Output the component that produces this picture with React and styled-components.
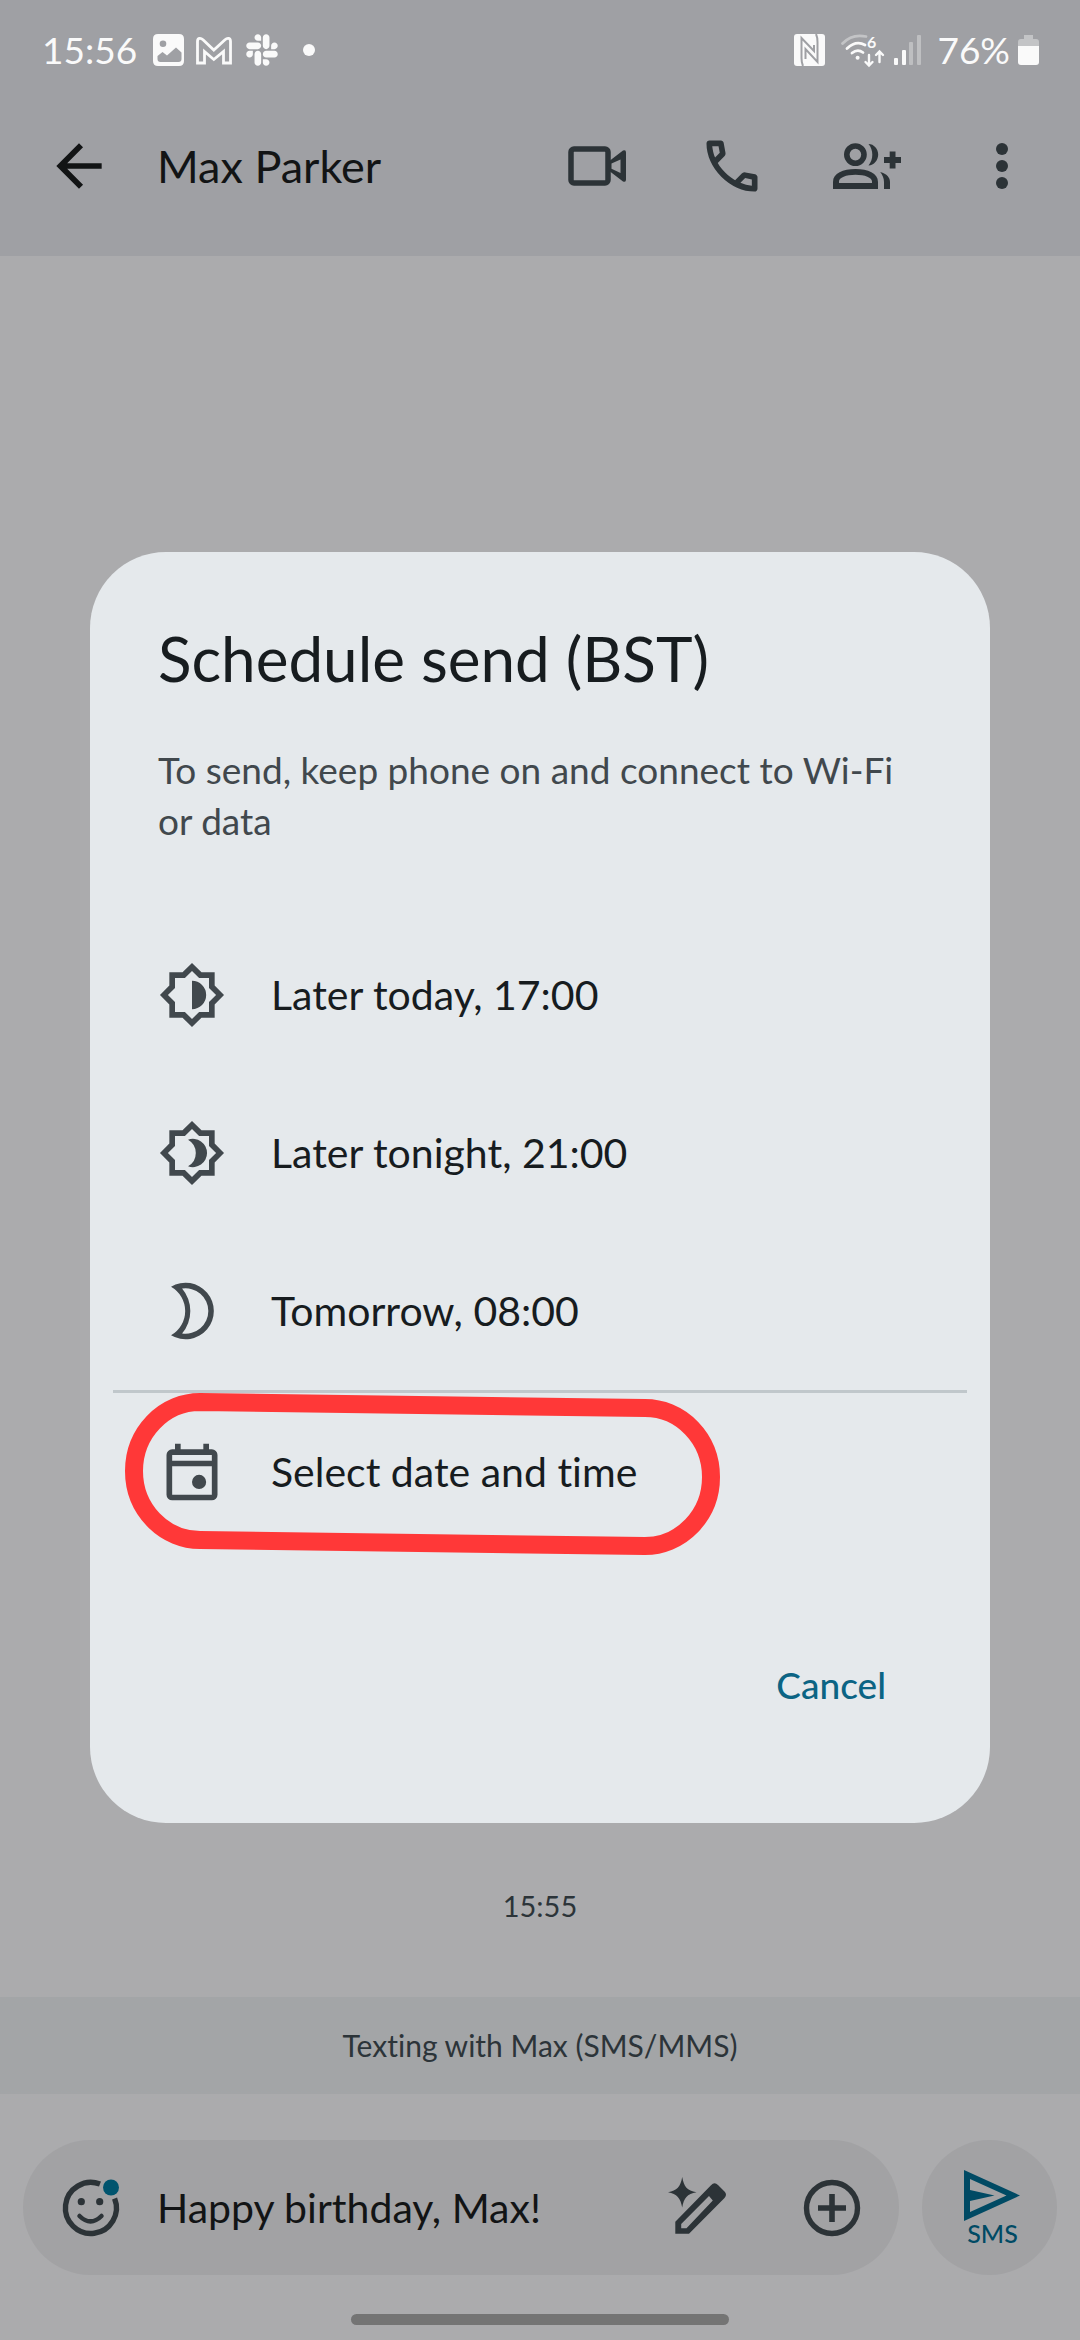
import { useState } from "react";
import styled, { createGlobalStyle } from "styled-components";
import { FaSlack } from "react-icons/fa";

const GlobalStyle = createGlobalStyle`
  * {
    box-sizing: border-box;
  }
  body {
    margin: 0;
    background: #ababad;
    font-family: Lato, "Open Sans", sans-serif;
    font-variant-ligatures: none;
  }
  button, input {
    font-family: inherit;
    font-variant-ligatures: inherit;
  }
`;

const Screen = styled.div`
  min-height: 100vh;
  display: flex;
  flex-direction: column;
  background: #ababad;
  color: #121415;
`;

const Header = styled.header`
  background: #9fa0a4;
`;

const StatusBar = styled.div`
  height: 76px;
  padding: 24px 41px 0 42px;
  display: flex;
  align-items: center;
  justify-content: space-between;
  color: #fafafa;
  font-size: 37px;
  line-height: 40px;
`;

const StatusGroup = styled.div`
  display: flex;
  align-items: center;
  gap: ${(props) => props.$gap}px;
`;

const Clock = styled.span`
  margin-right: 4px;
`;

const AppBar = styled.div`
  height: 180px;
  padding: 0 44px 0 45px;
  display: flex;
  align-items: center;
  gap: 44px;
`;

const Contact = styled.h1`
  margin: 0;
  flex: 1;
  font-size: 45px;
  font-weight: 400;
  line-height: 56px;
`;

const Actions = styled.div`
  display: flex;
  gap: 67px;
`;

const IconButton = styled.button`
  width: 68px;
  height: 68px;
  padding: 0;
  border: none;
  background: none;
  color: ${(props) => props.$color || "#2c3337"};
  cursor: pointer;
  svg {
    display: block;
  }
`;

const Messages = styled.main`
  flex: 1;
  display: flex;
  flex-direction: column;
  justify-content: flex-end;
  padding-bottom: 71px;
`;

const Timestamp = styled.time`
  text-align: center;
  color: #2c3439;
  font-size: 29px;
  line-height: 40px;
`;

const Banner = styled.div`
  padding: 28px 24px 29px;
  background: #a3a5a7;
  color: #2c3439;
  font-size: 30px;
  line-height: 40px;
  text-align: center;
`;

const Compose = styled.form`
  padding: 46px 23px 39px;
  display: flex;
  gap: 23px;
`;

const Field = styled.div`
  flex: 1;
  min-width: 0;
  height: 135px;
  padding: 0 33px 0 34px;
  display: flex;
  align-items: center;
  gap: 32px;
  border-radius: 68px;
  background: #a2a2a4;
`;

const MessageInput = styled.input`
  flex: 1;
  min-width: 0;
  padding: 0;
  border: none;
  outline: none;
  background: none;
  color: #121415;
  font-size: 41px;
  line-height: 52px;
`;

const SendButton = styled.button`
  width: 135px;
  height: 135px;
  padding: 0 0 0 6px;
  border: none;
  border-radius: 50%;
  display: flex;
  flex-direction: column;
  align-items: center;
  justify-content: center;
  background: #a2a2a4;
  color: #004a64;
  font-size: 25px;
  font-weight: 500;
  line-height: 24px;
`;

const NavHandle = styled.div`
  width: 35%;
  height: 11px;
  margin: 0 auto 15px;
  border-radius: 6px;
  background: #747474;
`;

const Overlay = styled.div`
  position: fixed;
  inset: 0;
  padding: 82px 90px 48px;
  display: flex;
  align-items: center;
`;

const Dialog = styled.section`
  width: 100%;
  padding-bottom: 98px;
  border-radius: 76px;
  background: #e5e9ec;
`;

const DialogTitle = styled.h2`
  margin: 0;
  padding: 68px 68px 0;
  color: #171c1f;
  font-size: 62px;
  font-weight: 400;
  line-height: 76px;
`;

const DialogText = styled.p`
  margin: 0;
  padding: 48px 92px 70px 68px;
  color: #41484d;
  font-size: 37px;
  line-height: 51px;
`;

const NoBreak = styled.span`
  white-space: nowrap;
`;

const Option = styled.button`
  width: 100%;
  height: 158px;
  padding: 0 68px;
  border: none;
  display: flex;
  align-items: center;
  gap: 45px;
  background: none;
  color: #171c1f;
  font-size: 41px;
  line-height: 52px;
  text-align: left;
  svg {
    color: #41484d;
  }
`;

const Divider = styled.hr`
  height: 3px;
  margin: 0 23px;
  border: none;
  background: #c0c7cb;
`;

const Marked = styled.div`
  position: relative;
`;

const Marker = styled.svg`
  position: absolute;
  top: -4px;
  left: 30px;
  pointer-events: none;
`;

const DialogActions = styled.div`
  padding: 94px 84px 0;
  display: flex;
  justify-content: flex-end;
`;

const TextButton = styled.button`
  padding: 0 20px;
  border: none;
  background: none;
  color: #0b6484;
  font-size: 37px;
  font-weight: 500;
  line-height: 80px;
`;

const Symbol = ({ d }) => (
  <svg width="68" height="68" viewBox="0 -960 960 960" fill="currentColor">
    <path d={d} />
  </svg>
);

const Drawing = ({ width = 68, height = 68, children }) => (
  <svg width={width} height={height} viewBox={`0 0 ${width} ${height}`} fill="currentColor">
    {children}
  </svg>
);

const BACK = "m313-440 224 224-57 56-320-320 320-320 57 56-224 224h487v80H313Z";
const CALL =
  "M798-120q-125 0-247-54.5T329-329Q229-429 174.5-551T120-798q0-18 12-30t30-12h162q14 0 25 9.5t13 22.5l26 140q2 16-1 27t-11 19l-97 98q20 37 47.5 71.5T387-386q31 31 65 57.5t72 48.5l94-94q9-9 23.5-13.5T670-390l138 28q14 4 23 14.5t9 23.5v162q0 18-12 30t-30 12ZM241-600l66-66-17-94h-89q5 41 14 81t26 79Zm358 358q39 17 79.5 27t81.5 13v-88l-94-19-67 67Z";
const EVENT =
  "M580-240q-42 0-71-29t-29-71q0-42 29-71t71-29q42 0 71 29t29 71q0 42-29 71t-71 29ZM200-80q-33 0-56.5-23.5T120-160v-560q0-33 23.5-56.5T200-800h40v-80h80v80h320v-80h80v80h40q33 0 56.5 23.5T840-720v560q0 33-23.5 56.5T760-80H200Zm0-80h560v-400H200v400Zm0-480h560v-80H200v80Z";
const SUN =
  "M480-28 346-160H160v-186L28-480l132-134v-186h186l134-132 134 132h186v186l132 134-132 134v186H614L480-28Zm0-112 100-100h140v-140l100-100-100-100v-140H580L480-820 380-720H240v140L140-480l100 100v140h140l100 100Z";

const TodayIcon = () => (
  <Symbol d={`${SUN}M480-280q83 0 141.5-58.5T680-480q0-83-58.5-141.5T480-680v400Z`} />
);

const TonightIcon = () => (
  <Symbol d={`${SUN}M424-668A200 200 0 1 1 424-292A216 216 0 0 0 424-668Z`} />
);

const MoonIcon = () => (
  <svg width="68" height="68" viewBox="0 0 24 24" fill="currentColor">
    <path
      fillRule="evenodd"
      d="M4.6 3.4A10 10 0 1 1 4.6 20.6A9.9 9.9 0 0 0 4.6 3.4ZM8.5 4.1A12.2 12.2 0 0 1 8.5 19.9A8 8 0 1 0 8.5 4.1Z"
    />
  </svg>
);

const VideoIcon = () => (
  <Drawing>
    <rect x="8" y="17" width="37" height="34" rx="3" fill="none" stroke="currentColor" strokeWidth="5.5" />
    <path
      fillRule="evenodd"
      d="M47 28.5L60 18.6Q63 17.2 63 20.5V47.5Q63 50.8 60 49.4L47 39.5ZM48.5 31.5V36.8L57.5 41V27.5Z"
    />
  </Drawing>
);

const GroupAddIcon = () => (
  <Drawing>
    <circle cx="22.4" cy="22.6" r="8.6" fill="none" stroke="currentColor" strokeWidth="5.6" />
    <path
      fillRule="evenodd"
      d="M0 57V50C0 41 10 37 22.5 37S45 41 45 50V57ZM6 51H39V49.5C39 45.5 32 42.7 22.5 42.7S6 45.5 6 49.5Z"
    />
    <path d="M35.5 12C41 12 45.2 17 45.2 22.6S41 33.5 35.5 33.5C38 30.5 39.3 27 39.3 22.8S38 15 35.5 12Z" />
    <path d="M47.2 40C54 42 57 45.5 57 50V57H51V50C51 46 49.5 43 47.2 40Z" />
    <path d="M56.7 19.5H62.5V25H68V31H62.5V36.5H56.7V31H51V25H56.7Z" />
  </Drawing>
);

const MoreIcon = () => (
  <Drawing>
    <circle cx="34" cy="17" r="6" />
    <circle cx="34" cy="34" r="6" />
    <circle cx="34" cy="51" r="6" />
  </Drawing>
);

const EmojiIcon = () => (
  <Drawing>
    <path d="M43 10.1A25.5 25.5 0 1 0 57.6 24.5" fill="none" stroke="currentColor" strokeWidth="5.4" />
    <circle cx="24.3" cy="27.7" r="3.6" />
    <circle cx="42.7" cy="27.7" r="3.6" />
    <path d="M22.5 42Q33.5 53 44.5 42" fill="none" stroke="currentColor" strokeWidth="4.5" strokeLinecap="round" />
    <circle cx="54" cy="13.5" r="8" fill="#00546e" />
  </Drawing>
);

const MagicIcon = () => (
  <Drawing>
    <path
      fillRule="evenodd"
      d="M12.3 59.7V47.7L48 11.2Q51.5 7.5 55 11L61.5 17.5Q64.5 20.5 61.5 24L26 59.7ZM18.2 54.3H23.5L49.8 26.5L46 22L18.2 50Z"
    />
    <path d="M19.2 3C21 13 24 16.5 33.5 18.3C24 20 21 24 19.2 33.5C17.5 24 14 20 5 18.3C14 16.5 17.5 13 19.2 3Z" />
  </Drawing>
);

const AddIcon = () => (
  <Drawing>
    <circle cx="34" cy="34" r="25.5" fill="none" stroke="currentColor" strokeWidth="5.4" />
    <path d="M34 20V48M20 34H48" stroke="currentColor" strokeWidth="5.6" />
  </Drawing>
);

const SendIcon = () => (
  <Drawing width={57} height={51}>
    <path fillRule="evenodd" d="M0 0L56 25.5L0 51ZM6 9V20L30.5 25.5L6 31V42L42.5 25.5Z" />
  </Drawing>
);

const GalleryIcon = () => (
  <Drawing width={31} height={32}>
    <path
      fillRule="evenodd"
      d="M5 0H26Q31 0 31 5V27Q31 32 26 32H5Q0 32 0 27V5Q0 0 5 0ZM10 6.5A3.3 3.3 0 1 0 10 13.1A3.3 3.3 0 1 0 10 6.5ZM4.5 25V22L9.5 18L14 21.5L23 13.5L28.5 18.5V25Q28.5 28 25.5 28H7.5Q4.5 28 4.5 25Z"
    />
  </Drawing>
);

const MailIcon = () => (
  <Drawing width={36} height={29}>
    <path
      d="M1.5 27V5.5C1.5 2 4.5 1.5 7 3.8L17.8 14L29 3.8C31.5 1.5 34.5 2 34.5 5.5V27H27.5V15.5L17.8 23.5L8.5 15.5V27Z"
      fill="none"
      stroke="currentColor"
      strokeWidth="2.8"
    />
  </Drawing>
);

const NfcIcon = () => (
  <Drawing width={38} height={32}>
    <rect width="31" height="32" rx="3" />
    <path
      d="M9 32Q7.5 29 7.5 24V4L20 17V11M22 0Q23.5 3 23.5 8V28L11.5 15V25"
      fill="none"
      stroke="#9fa0a4"
      strokeWidth="2"
    />
  </Drawing>
);

const WifiIcon = () => (
  <Drawing width={46} height={38}>
    <g fill="none" stroke="currentColor" strokeWidth="2.8" strokeLinecap="round">
      <path d="M2.5 12.5Q12 2.5 26 5.5" opacity="0.4" />
      <path d="M7 17.5Q16 9 25 14" />
      <path d="M12 22Q17.6 17.5 23 21.5" />
      <path d="M29 24V34M25.5 31L29 34.5L32.5 31M39.5 31V21M36 24L39.5 20.5L43 24" strokeWidth="2.4" />
    </g>
    <circle cx="17.6" cy="26.7" r="2" />
    <text x="27" y="17" fontSize="16" fontWeight="700">6</text>
  </Drawing>
);

const SignalIcon = () => (
  <Drawing width={35} height={32}>
    <rect x="0" y="24" width="4" height="7" rx="1" />
    <rect x="8" y="16" width="4" height="15" rx="1" />
    <rect x="15" y="8" width="4" height="23" rx="1" opacity="0.35" />
    <rect x="23" y="1" width="4" height="30" rx="1" opacity="0.35" />
  </Drawing>
);

const BatteryIcon = () => (
  <Drawing width={21} height={32}>
    <path d="M6 1H15V5H18Q21 5 21 8V12H0V8Q0 5 3 5H6Z" opacity="0.4" />
    <path d="M0 12H21V28Q21 31 18 31H3Q0 31 0 28Z" />
  </Drawing>
);

const options = [
  { label: "Later today, 17:00", icon: <TodayIcon /> },
  { label: "Later tonight, 21:00", icon: <TonightIcon /> },
  { label: "Tomorrow, 08:00", icon: <MoonIcon /> },
];

const App = () => {
  const [message, setMessage] = useState("Happy birthday, Max!");

  return (
    <>
      <GlobalStyle />
      <Screen>
        <Header>
          <StatusBar>
            <StatusGroup $gap={12}>
              <Clock>15:56</Clock>
              <GalleryIcon />
              <MailIcon />
              <FaSlack size={36} />
              <Drawing width={30} height={12}>
                <circle cx="17" cy="6" r="6" />
              </Drawing>
            </StatusGroup>
            <StatusGroup $gap={8}>
              <NfcIcon />
              <WifiIcon />
              <SignalIcon />
              <span>76%</span>
              <BatteryIcon />
            </StatusGroup>
          </StatusBar>
          <AppBar>
            <IconButton type="button" aria-label="Back" $color="#121415">
              <Symbol d={BACK} />
            </IconButton>
            <Contact>Max Parker</Contact>
            <Actions>
              <IconButton type="button" aria-label="Video call">
                <VideoIcon />
              </IconButton>
              <IconButton type="button" aria-label="Call">
                <Symbol d={CALL} />
              </IconButton>
              <IconButton type="button" aria-label="Add people">
                <GroupAddIcon />
              </IconButton>
              <IconButton type="button" aria-label="More options">
                <MoreIcon />
              </IconButton>
            </Actions>
          </AppBar>
        </Header>
        <Messages>
          <Timestamp>15:55</Timestamp>
        </Messages>
        <Banner>Texting with Max (SMS/MMS)</Banner>
        <Compose onSubmit={(e) => e.preventDefault()}>
          <Field>
            <IconButton type="button" aria-label="Emoji">
              <EmojiIcon />
            </IconButton>
            <MessageInput
              type="text"
              aria-label="Message"
              value={message}
              onChange={(e) => setMessage(e.target.value)}
            />
            <Actions>
              <IconButton type="button" aria-label="Rewrite">
                <MagicIcon />
              </IconButton>
              <IconButton type="button" aria-label="Attach">
                <AddIcon />
              </IconButton>
            </Actions>
          </Field>
          <SendButton type="submit">
            <SendIcon />
            SMS
          </SendButton>
        </Compose>
        <NavHandle />
      </Screen>
      <Overlay>
        <Dialog role="dialog" aria-labelledby="schedule-title">
          <DialogTitle id="schedule-title">Schedule send (BST)</DialogTitle>
          <DialogText>
            To send, keep phone on and connect to <NoBreak>Wi-Fi</NoBreak> or data
          </DialogText>
          {options.map((option) => (
            <Option type="button" key={option.label}>
              {option.icon}
              {option.label}
            </Option>
          ))}
          <Divider />
          <Marked>
            <Option type="button">
              <Symbol d={EVENT} />
              Select date and time
            </Option>
            <Marker width="606" height="170" viewBox="0 0 606 170" fill="none">
              <path
                d="M80 13L525 19A66 69 0 0 1 525 157L80 151A66 69 0 0 1 80 13Z"
                stroke="#ff3838"
                strokeWidth="18"
              />
            </Marker>
          </Marked>
          <DialogActions>
            <TextButton type="button">Cancel</TextButton>
          </DialogActions>
        </Dialog>
      </Overlay>
    </>
  );
};

export default App;
